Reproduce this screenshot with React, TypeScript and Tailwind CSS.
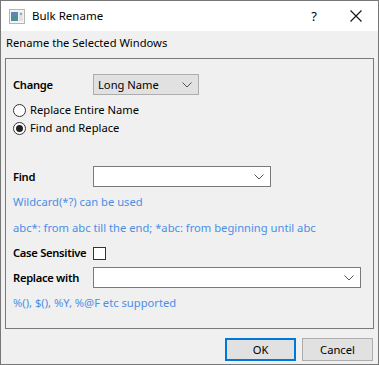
const FONT = "font-['Noto_Sans',sans-serif]";

function Chevron() {
  return (
    <svg width="10" height="6" viewBox="0 0 10 6" className="shrink-0">
      <path d="M0.5 0.5 L5 5 L9.5 0.5" fill="none" stroke="#555" strokeWidth="1" />
    </svg>
  );
}

function Radio({ checked, label }: { checked?: boolean; label: string }) {
  return (
    <div className="flex h-[18px] items-center">
      <span className="flex h-[13px] w-[13px] items-center justify-center rounded-full border border-[#333] bg-white">
        {checked && <span className="h-[7px] w-[7px] rounded-full bg-[#222]" />}
      </span>
      <span className="ml-[4px]">{label}</span>
    </div>
  );
}

function Combo({ width, children, white }: { width: string; children?: React.ReactNode; white?: boolean }) {
  return (
    <div
      className={`flex h-[21px] items-center justify-between border pl-[4px] pr-[6px] ${width} ${
        white ? "border-[#7a7a7a] bg-white" : "border-[#adadad] bg-[#e1e1e1]"
      }`}
    >
      <span>{children}</span>
      <Chevron />
    </div>
  );
}

function Label({ children }: { children: React.ReactNode }) {
  return <span className="w-[80px] whitespace-nowrap font-semibold tracking-[-0.3px]">{children}</span>;
}

export default function App() {
  return (
    <div className={`flex h-[365px] w-[379px] flex-col border border-[#777] bg-[#f0f0f0] text-[11.2px] leading-[16px] text-black ${FONT}`}>
      {/* title bar */}
      <div className="flex h-[30px] shrink-0 items-center bg-white">
        <svg width="16" height="15" viewBox="0 0 16 15" className="ml-[8px]">
          <rect x="0.5" y="0.5" width="15" height="14" fill="#f4f4f4" stroke="#b5b5b5" />
          <rect x="2" y="3" width="7" height="9" fill="#4f8f9a" />
          <rect x="2" y="3" width="7" height="4" fill="#5e87b8" />
          <rect x="10" y="3" width="4" height="9" fill="#e2e2e2" />
          <rect x="11" y="4" width="2" height="2" fill="#7fb7a8" />
        </svg>
        <span className="ml-[7px] text-[11.5px]">Bulk Rename</span>
        <span className="ml-auto mr-[33px] text-[13px]">?</span>
        <svg width="12" height="12" viewBox="0 0 12 12" className="mr-[16px]">
          <path d="M0.5 0.5 L11.5 11.5 M11.5 0.5 L0.5 11.5" stroke="#111" strokeWidth="1.1" />
        </svg>
      </div>

      <div className="flex flex-1 flex-col px-[4px]">
        <div className="mt-[4px] pl-[1px]">Rename the Selected Windows</div>

        {/* group box */}
        <div className="mt-[7px] flex h-[271px] flex-col border border-[#7a7a7a] pl-[7px]">
          <div className="mt-[15px] flex items-center">
            <Label>Change</Label>
            <Combo width="w-[106px]">Long Name</Combo>
          </div>
          <div className="mt-[6px]">
            <Radio label="Replace Entire Name" />
            <Radio checked label="Find and Replace" />
          </div>
          <div className="mt-[29px] flex items-center">
            <Label>Find</Label>
            <Combo width="w-[178px]" white />
          </div>
          <div className="mt-[7px] text-[#4a8fe6]">Wildcard(*?) can be used</div>
          <div className="mt-[10px] text-[#4a8fe6]">abc*: from abc till the end; *abc: from beginning until abc</div>
          <div className="mt-[9px] flex h-[16px] items-center">
            <Label>Case Sensitive</Label>
            <span className="h-[13px] w-[13px] border border-[#333] bg-white" />
          </div>
          <div className="mt-[6px] flex items-center">
            <Label>Replace with</Label>
            <Combo width="w-[268px]" white />
          </div>
          <div className="mt-[7px] text-[#4a8fe6]">%(), $(), %Y, %@F etc supported</div>
        </div>

        {/* buttons */}
        <div className="mt-[9px] flex justify-end gap-[6px] pr-[1px]">
          <button className="flex h-[23px] w-[71px] items-center justify-center border-2 border-[#0078d7] bg-[#e1e1e1]">
            OK
          </button>
          <button className="flex h-[23px] w-[71px] items-center justify-center border border-[#adadad] bg-[#e1e1e1]">
            Cancel
          </button>
        </div>
      </div>
    </div>
  );
}
